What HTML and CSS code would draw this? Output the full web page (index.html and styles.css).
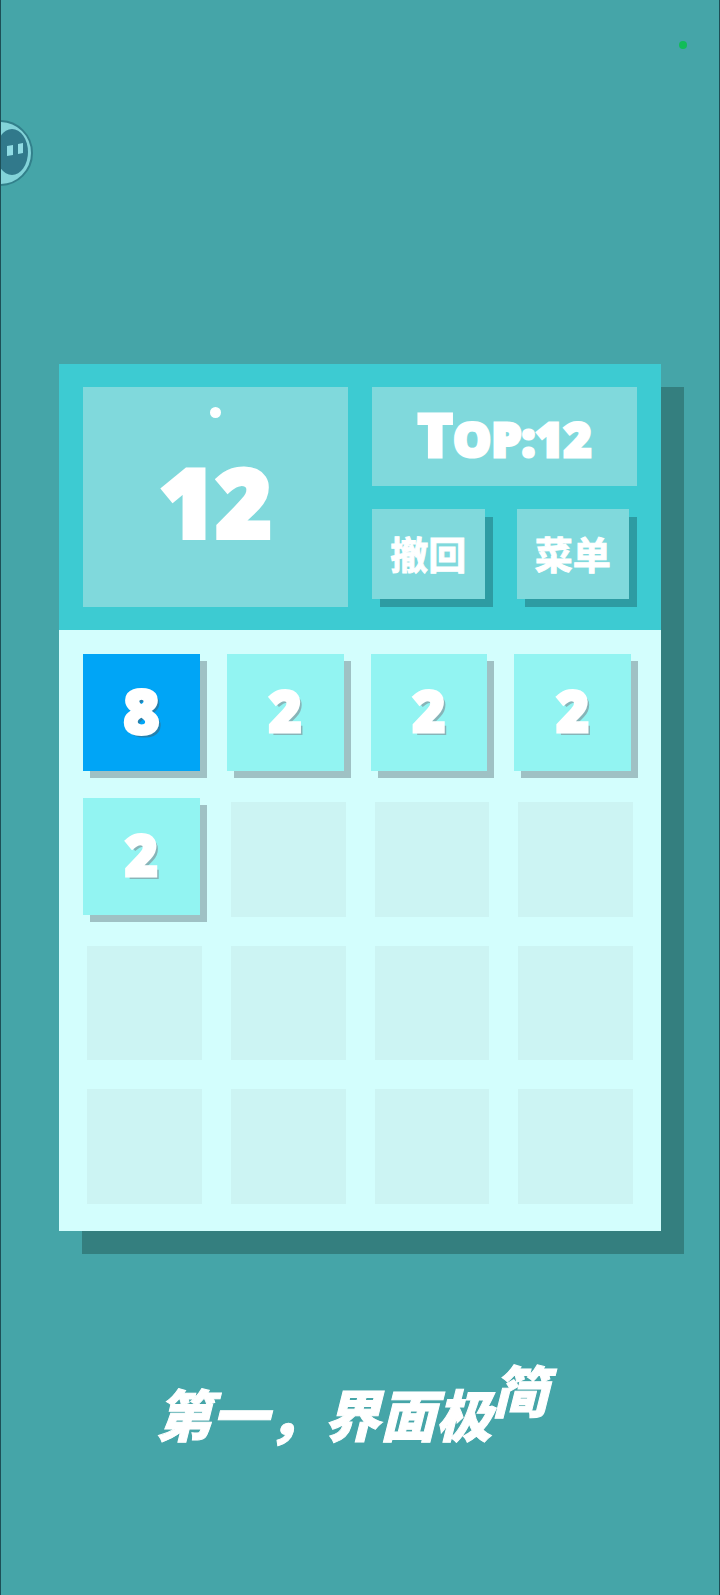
FILE: index.html
```html
<!DOCTYPE html>
<html lang="zh-CN">
<head>
<meta charset="utf-8">
<meta name="viewport" content="width=device-width, initial-scale=1">
<title>2048</title>
<link rel="stylesheet" href="styles.css">
</head>
<body>
<div class="screen">
  <span class="camera-light"></span>
  <button class="assistant" type="button" aria-label="助手">
    <svg viewBox="0 0 34 68" width="34" height="68">
      <circle cx="-1" cy="34" r="32" fill="#83d3d9" stroke="#32808b" stroke-width="2"/>
      <ellipse cx="11" cy="33" rx="16" ry="23" fill="#31798b"/>
      <path d="M6 27l6-1v10l-6 1zM17 25l5-1v10l-5 1z" fill="#91dce4"/>
    </svg>
  </button>
  <main class="game">
    <header class="panel">
      <section class="score"><span class="score-dot"></span><strong class="score-value">12</strong></section>
      <div class="side">
        <div class="top"><span class="top-initial">T</span>OP:12</div>
        <div class="actions">
          <button class="action" type="button">撤回</button>
          <button class="action" type="button">菜单</button>
        </div>
      </div>
    </header>
    <section class="grid">
      <div class="cell"><div class="tile tile-8">8</div></div>
      <div class="cell"><div class="tile">2</div></div>
      <div class="cell"><div class="tile">2</div></div>
      <div class="cell"><div class="tile">2</div></div>
      <div class="cell"><div class="tile">2</div></div>
      <div class="cell empty"><div class="slot"></div></div>
      <div class="cell empty"><div class="slot"></div></div>
      <div class="cell empty"><div class="slot"></div></div>
      <div class="cell empty"><div class="slot"></div></div>
      <div class="cell empty"><div class="slot"></div></div>
      <div class="cell empty"><div class="slot"></div></div>
      <div class="cell empty"><div class="slot"></div></div>
      <div class="cell empty"><div class="slot"></div></div>
      <div class="cell empty"><div class="slot"></div></div>
      <div class="cell empty"><div class="slot"></div></div>
      <div class="cell empty"><div class="slot"></div></div>
    </section>
  </main>
  <p class="caption">第一，界面极<span class="raised">简</span></p>
</div>
</body>
</html>
```
FILE: styles.css
```css
* {
  box-sizing: border-box;
}

body {
  margin: 0;
  background: #45a5a8;
  color: #fff;
  font-family: "Open Sans", "Noto Sans CJK SC", sans-serif;
}

.screen {
  position: relative;
  min-height: 100vh;
  padding: 364px 58px 0;
  border-left: 1px solid #1d4f57;
  border-right: 1px solid #1d4f57;
}

.camera-light {
  position: absolute;
  top: 41px;
  right: 32px;
  width: 8px;
  height: 8px;
  border-radius: 50%;
  background: #12bd59;
}

.assistant {
  position: absolute;
  top: 119px;
  left: 0;
  padding: 0;
  border: 0;
  background: none;
}

.assistant svg {
  display: block;
}

.game {
  background: #d3fefd;
  box-shadow: 23px 23px 0 #347f7f;
}

.panel {
  display: grid;
  grid-template-columns: 1fr 1fr;
  gap: 24px;
  padding: 23px 24px;
  background: #3dcbd2;
}

.score {
  display: flex;
  flex-direction: column;
  align-items: center;
  padding-top: 20px;
  background: #80d9dc;
}

.score-dot {
  width: 11px;
  height: 11px;
  border-radius: 50%;
  background: #fff;
}

.score-value {
  margin-top: 15px;
  font-size: 96px;
  font-weight: 800;
  line-height: 136px;
  -webkit-text-stroke: 4px #fff;
}

.side {
  display: grid;
  gap: 23px;
}

.top {
  height: 99px;
  background: #80d9dc;
  font-size: 48px;
  font-weight: 800;
  line-height: 104px;
  text-align: center;
  -webkit-text-stroke: 3px #fff;
}

.top-initial {
  font-size: 60px;
  line-height: 1;
}

.actions {
  display: grid;
  grid-template-columns: 1fr 1fr;
  gap: 32px;
  padding: 0 8px 8px 0;
}

.action {
  height: 90px;
  padding: 0 0 2px;
  border: 0;
  background: #80d9dc;
  box-shadow: 8px 8px 0 #2d9ca3;
  color: #fff;
  font: 700 38px/1 "Noto Sans CJK SC", sans-serif;
  -webkit-text-stroke: 1px #fff;
}

.grid {
  display: grid;
  grid-template-columns: repeat(4, 1fr);
  gap: 24px;
  padding: 24px 27px 26px 24px;
}

.cell {
  display: grid;
  aspect-ratio: 1;
  padding: 0 3px 3px 0;
}

.cell.empty {
  padding: 4px 1px 1px 4px;
}

.slot {
  background: #ccf4f3;
}

.tile {
  display: grid;
  place-items: center;
  padding-bottom: 4px;
  background: #92f4f2;
  box-shadow: 7px 7px 0 #9fc1c4;
  font-size: 56px;
  font-weight: 800;
  line-height: 1;
  text-shadow: 3px 3px 0 #87b4b8;
  -webkit-text-stroke: 3px #fff;
}

.tile-8 {
  background: #00a5f6;
  font-size: 62px;
  text-shadow: 3px 3px 0 #2481ae;
}

.caption {
  margin: 130px 16px 0 0;
  text-align: center;
  font: italic 900 56px/80px "Noto Sans CJK SC", sans-serif;
  -webkit-text-stroke: 1px #fff;
}

.raised {
  line-height: 1;
  vertical-align: 24px;
}
```
